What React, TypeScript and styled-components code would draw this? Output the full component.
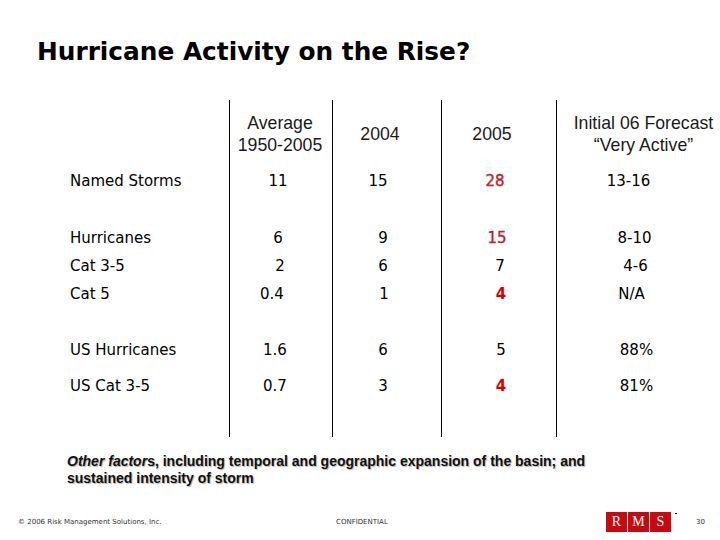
import React from 'react';
import styled, { createGlobalStyle } from 'styled-components';

const GlobalStyle = createGlobalStyle`
    html, body {
        margin: 0;
        padding: 0;
        background: #ffffff;
    }
`;

const Page = styled.div`
    width: 720px;
    height: 540px;
    display: flex;
    flex-direction: column;
    overflow: hidden;
    background: #ffffff;
`;

const Title = styled.h1`
    margin: 0;
    padding: 37px 0 0 37px;
    font-family: 'DejaVu Sans', Verdana, sans-serif;
    font-weight: bold;
    font-size: 24.8px;
    line-height: 30px;
    color: #000000;
`;

const Table = styled.div`
    display: flex;
    margin-top: 33px;
    padding-left: 70px;
`;

const Column = styled.div<{ $width: number; $rule?: boolean }>`
    display: flex;
    flex-direction: column;
    width: ${(p) => p.$width}px;
    flex: ${(p) => (p.$width ? 'none' : '1')};
    height: 337px;
    border-left: ${(p) => (p.$rule ? '1px solid #000000' : 'none')};
`;

const HeadCell = styled.div<{ $dx?: number }>`
    height: 67px;
    display: flex;
    align-items: center;
    justify-content: center;
    text-align: center;
    font-family: 'Liberation Sans', Arial, sans-serif;
    font-size: 17.7px;
    line-height: 22px;
    color: #1a1a1a;
    white-space: nowrap;
    padding-left: ${(p) => Math.max(0, (p.$dx || 0) * 2)}px;
    padding-right: ${(p) => Math.max(0, -(p.$dx || 0) * 2)}px;
`;

const Cell = styled.div<{ $gap: number; $dx?: number; $label?: boolean; $red?: 'soft' | 'strong' }>`
    height: 28px;
    margin-top: ${(p) => p.$gap}px;
    display: flex;
    align-items: center;
    justify-content: ${(p) => (p.$label ? 'flex-start' : 'center')};
    font-family: 'DejaVu Sans', Tahoma, sans-serif;
    font-size: 15px;
    color: ${(p) => (p.$red === 'soft' ? '#c0202a' : p.$red === 'strong' ? '#d80000' : '#000000')};
    font-weight: ${(p) => (p.$red === 'strong' ? 'bold' : 'normal')};
    -webkit-text-stroke: ${(p) => (p.$red === 'soft' ? '0.4px #c0202a' : '0')};
    white-space: nowrap;
    padding-left: ${(p) => Math.max(0, (p.$dx || 0) * 2)}px;
    padding-right: ${(p) => Math.max(0, -(p.$dx || 0) * 2)}px;
`;

const Note = styled.p`
    margin: 16px 0 0 67px;
    font-family: 'Liberation Sans', Arial, sans-serif;
    font-weight: bold;
    font-size: 14px;
    line-height: 17px;
    color: #111111;
    text-shadow: 1px 1px 1px #b0b0b0;
    white-space: nowrap;
`;

const Footer = styled.div`
    margin-top: auto;
    margin-bottom: 8px;
    display: grid;
    grid-template-columns: 318px 270px 90px 1fr;
    align-items: center;
    padding-left: 18px;
    height: 20px;
`;

const Small = styled.span`
    font-family: 'DejaVu Sans', Tahoma, sans-serif;
    font-size: 7px;
    color: #333333;
    white-space: nowrap;
`;

const Logo = styled.div`
    display: flex;
    gap: 1px;
    height: 20px;
`;

const LogoBox = styled.span`
    width: 21px;
    height: 20px;
    background: #c8090d;
    color: #ffffff;
    font-family: 'Liberation Serif', 'Times New Roman', serif;
    font-size: 14px;
    display: flex;
    align-items: center;
    justify-content: center;
`;

const LogoMark = styled.span`
    width: 2px;
    height: 1px;
    margin-left: 3px;
    margin-top: 1px;
    background: #000000;
`;

type Red = 'soft' | 'strong';
type Row = { label: string; gap: number; values: [string, number, Red?][] };

const headers: { lines: string[]; dx: number; width: number }[] = [
    { lines: ['Average', '1950-2005'], dx: -1, width: 102 },
    { lines: ['2004'], dx: -7, width: 108 },
    { lines: ['2005'], dx: -7, width: 114 },
    { lines: ['Initial 06 Forecast', '\u201cVery Active\u201d'], dx: 5, width: 0 },
];

const rows: Row[] = [
    { label: 'Named Storms', gap: 0, values: [['11', -3], ['15', -9], ['28', -4, 'soft'], ['13-16', -10]] },
    { label: 'Hurricanes', gap: 29, values: [['6', -3], ['9', -4], ['15', -2, 'soft'], ['8-10', -4]] },
    { label: 'Cat 3-5', gap: 0, values: [['2', -1], ['6', -4], ['7', 1], ['4-6', -3]] },
    { label: 'Cat 5', gap: 0, values: [['0.4', -9], ['1', -3], ['4', 2, 'strong'], ['N/A', -7]] },
    { label: 'US Hurricanes', gap: 28, values: [['1.6', -6], ['6', -4], ['5', 2], ['88%', -2]] },
    { label: 'US Cat 3-5', gap: 8, values: [['0.7', -6], ['3', -4], ['4', 2, 'strong'], ['81%', -2]] },
];

export const App: React.FC = () => {
    return (
        <Page>
            <GlobalStyle />
            <Title>Hurricane Activity on the Rise?</Title>

            <Table>
                <Column $width={159}>
                    <HeadCell />
                    {rows.map((row) => (
                        <Cell key={row.label} $gap={row.gap} $label>
                            {row.label}
                        </Cell>
                    ))}
                </Column>
                {headers.map((head, col) => (
                    <Column key={col} $width={head.width} $rule>
                        <HeadCell $dx={head.dx}>
                            <div>
                                {head.lines.map((line) => (
                                    <div key={line}>{line}</div>
                                ))}
                            </div>
                        </HeadCell>
                        {rows.map((row) => {
                            const [text, dx, red] = row.values[col];
                            return (
                                <Cell key={row.label} $gap={row.gap} $dx={dx} $red={red}>
                                    {text}
                                </Cell>
                            );
                        })}
                    </Column>
                ))}
            </Table>

            <Note>
                <i>Other factor</i>s, including temporal and geographic expansion of the basin; and
                <br />
                sustained intensity of storm
            </Note>

            <Footer>
                <Small>© 2006 Risk Management Solutions, Inc.</Small>
                <Small>CONFIDENTIAL</Small>
                <Logo>
                    <LogoBox>R</LogoBox>
                    <LogoBox>M</LogoBox>
                    <LogoBox>S</LogoBox>
                    <LogoMark />
                </Logo>
                <Small>30</Small>
            </Footer>
        </Page>
    );
};

export default App;
